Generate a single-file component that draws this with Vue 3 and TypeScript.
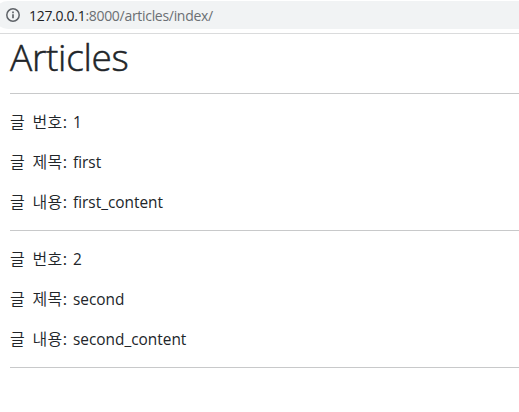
<script setup lang="ts">
interface Article {
  id: number
  title: string
  content: string
}

const articles: Article[] = [
  { id: 1, title: 'first', content: 'first_content' },
  { id: 2, title: 'second', content: 'second_content' },
]
</script>

<template>
  <div class="page">
    <header class="bar">
      <div class="address">
        <svg class="info" viewBox="0 0 16 16" width="16" height="16">
          <circle cx="8" cy="8" r="6.2" fill="none" stroke="#5f6368" stroke-width="1.5" />
          <path d="M8 7.2v4.1M8 4.6v1.6" stroke="#5f6368" stroke-width="1.7" />
        </svg>
        <span class="url"><span class="host">127.0.0.1</span>:8000/articles/index/</span>
      </div>
    </header>
    <main class="content">
      <h1>Articles</h1>
      <hr />
      <template v-for="a in articles" :key="a.id">
        <p><span class="ko">글 번호:</span><span class="value">{{ a.id }}</span></p>
        <p><span class="ko">글 제목:</span><span class="value">{{ a.title }}</span></p>
        <p><span class="ko">글 내용:</span><span class="value">{{ a.content }}</span></p>
        <hr />
      </template>
    </main>
  </div>
</template>

<style>
body {
  background: #fff;
}
</style>

<style scoped>
.page {
  height: 412px;
  overflow: hidden;
  color: #212529;
  font-family: "Open Sans", "Noto Sans CJK KR", sans-serif;
}
.bar {
  box-sizing: border-box;
  height: 34px;
  padding-top: 1px;
  border-bottom: 1px solid #dadbdc;
}
.address {
  box-sizing: border-box;
  height: 28px;
  margin-left: -6px;
  padding: 6px 0 0 11px;
  display: flex;
  align-items: flex-start;
  gap: 8px;
  border-radius: 14px 0 0 14px;
  background: #f1f3f4;
}
.url {
  font-size: 14px;
  line-height: 17px;
  letter-spacing: -0.3px;
  color: #6b6f73;
}
.host {
  color: #202124;
}
.content {
  padding-left: 10px;
}
h1 {
  margin: 0;
  height: 59px;
  font-size: 37px;
  line-height: 45px;
  font-weight: 300;
  letter-spacing: -0.3px;
  -webkit-text-stroke: 0.5px #212529;
}
hr {
  height: 1px;
  margin: 0 0 16px;
  border: 0;
  background: #c8c9ca;
}
p {
  display: flex;
  height: 24px;
  margin: 0 0 16px;
  white-space: nowrap;
}
.ko {
  width: 63px;
  font-family: "Noto Sans CJK KR", sans-serif;
  font-weight: 350;
  font-size: 16px;
  line-height: 22px;
  letter-spacing: 0.4px;
  word-spacing: 3.3px;
}
.value {
  font-size: 15.4px;
  line-height: 26px;
}
</style>
